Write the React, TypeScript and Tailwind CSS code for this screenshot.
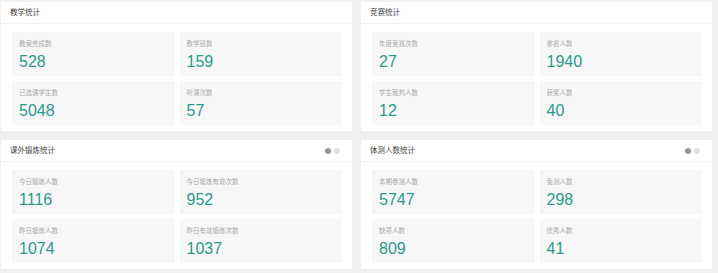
import React from 'react';

type Stat = { label: string; value: string };
type Panel = { title: string; dots?: boolean; stats: Stat[] };

const panels: Panel[] = [
  {
    title: '教学统计',
    stats: [
      { label: '教案完成数', value: '528' },
      { label: '教学班数', value: '159' },
      { label: '已选课学生数', value: '5048' },
      { label: '听课次数', value: '57' },
    ],
  },
  {
    title: '竞赛统计',
    stats: [
      { label: '年度竞赛次数', value: '27' },
      { label: '参赛人数', value: '1940' },
      { label: '学生裁判人数', value: '12' },
      { label: '获奖人数', value: '40' },
    ],
  },
  {
    title: '课外锻炼统计',
    dots: true,
    stats: [
      { label: '今日锻炼人数', value: '1116' },
      { label: '今日锻炼有效次数', value: '952' },
      { label: '昨日锻炼人数', value: '1074' },
      { label: '昨日有效锻炼次数', value: '1037' },
    ],
  },
  {
    title: '体测人数统计',
    dots: true,
    stats: [
      { label: '本期参测人数', value: '5747' },
      { label: '免测人数', value: '298' },
      { label: '缺项人数', value: '809' },
      { label: '优秀人数', value: '41' },
    ],
  },
];

const StatPanel: React.FC<{ panel: Panel }> = ({ panel }) => (
  <div className="bg-white h-[129px] flex flex-col">
    <div className="h-[22px] flex items-center justify-between pl-[9px] pr-[12px] border-b border-[#f2f2f2]">
      <span className="text-[7.5px] text-[#444]">{panel.title}</span>
      {panel.dots && (
        <div className="flex gap-[3px]">
          <span className="w-[6px] h-[6px] rounded-full bg-[#999]" />
          <span className="w-[6px] h-[6px] rounded-full bg-[#e0e0e0]" />
        </div>
      )}
    </div>
    <div className="grid grid-cols-2 gap-[5px] pt-[8px] pl-[11px] pr-[10px]">
      {panel.stats.map((s) => (
        <div key={s.label} className="bg-[#f7f7f7] h-[44px] pl-[7px] pt-[7px]">
          <div className="text-[6.5px] leading-[10px] text-[#aaa]">{s.label}</div>
          <div className="text-[16px] leading-[20px] text-[#2a9a8b] mt-[3px]">{s.value}</div>
        </div>
      ))}
    </div>
  </div>
);

export default function App() {
  return (
    <div
      className="w-[718px] h-[273px] bg-[#efefef] pt-[2px] pl-[1px]"
      style={{ fontFamily: '"Liberation Sans", "Noto Sans CJK SC", sans-serif' }}
    >
      <div className="grid grid-cols-[351px_351px] gap-x-[9px] gap-y-[9px]">
        {panels.map((p) => (
          <StatPanel key={p.title} panel={p} />
        ))}
      </div>
    </div>
  );
}
